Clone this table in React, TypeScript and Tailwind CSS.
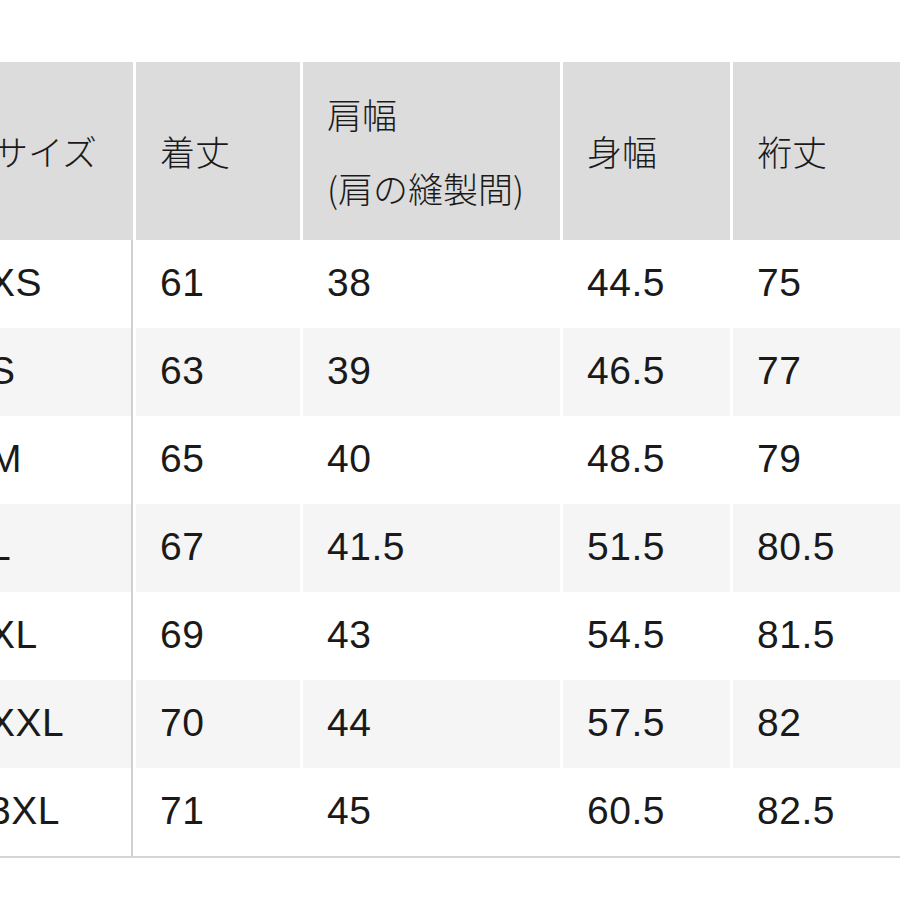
const rows = [
  ["XS", "61", "38", "44.5", "75"],
  ["S", "63", "39", "46.5", "77"],
  ["M", "65", "40", "48.5", "79"],
  ["L", "67", "41.5", "51.5", "80.5"],
  ["XL", "69", "43", "54.5", "81.5"],
  ["XXL", "70", "44", "57.5", "82"],
  ["3XL", "71", "45", "60.5", "82.5"],
];

const cols = "grid grid-cols-[168px_164px_257px_167px_1fr] gap-x-[3px]";

export default function App() {
  return (
    <div className="w-[900px] h-[900px] overflow-hidden bg-white text-[#1a1a1a] font-['Liberation_Sans','Noto_Sans_CJK_JP',sans-serif]">
      <div className="pt-[62px] ml-[-35px] w-[980px]">
        <div className={`${cols} h-[178px] text-[35px] font-light font-['Noto_Sans_CJK_JP',sans-serif]`}>
          <div className="bg-[#dcdcdc] flex items-center pl-7">サイズ</div>
          <div className="bg-[#dcdcdc] flex items-center pl-6">着丈</div>
          <div className="bg-[#dcdcdc] flex flex-col justify-center pl-6 leading-[74px]">
            <span>肩幅</span>
            <span>(肩の縫製間)</span>
          </div>
          <div className="bg-[#dcdcdc] flex items-center pl-6">身幅</div>
          <div className="bg-[#dcdcdc] flex items-center pl-6">裄丈</div>
        </div>
        <div className="border-b-2 border-[#d4d4d4] text-[39px] tracking-[0.5px]">
          {rows.map((r, i) => (
            <div key={r[0]} className={`${cols} h-[88px]`}>
              {r.map((v, j) => (
                <div
                  key={j}
                  className={`flex items-center pl-6 pb-[2px] ${i % 2 === 1 ? "bg-[#f5f5f5]" : "bg-white"} ${j === 0 ? "border-r-2 border-[#d0d0d0]" : ""}`}
                >
                  {v}
                </div>
              ))}
            </div>
          ))}
        </div>
      </div>
    </div>
  );
}
